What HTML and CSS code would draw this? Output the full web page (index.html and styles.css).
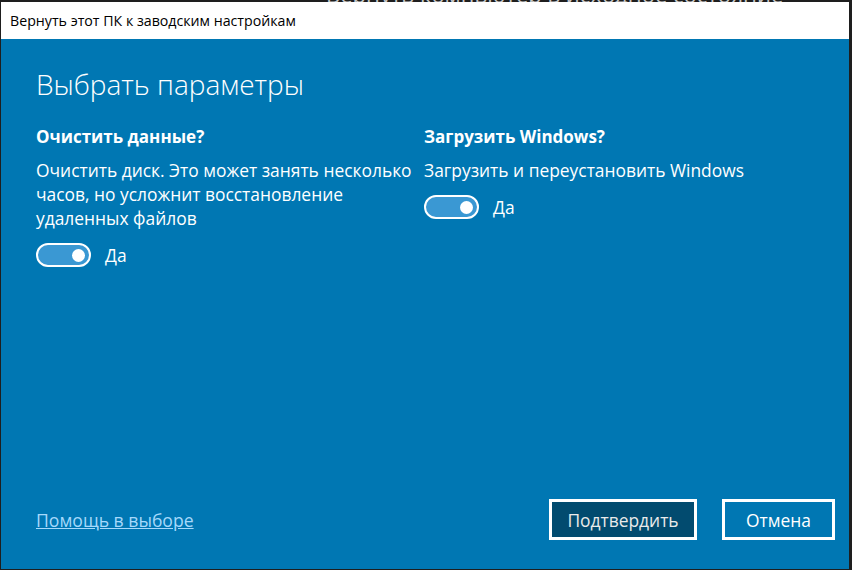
FILE: index.html
```html
<!DOCTYPE html>
<html lang="ru">
<head>
    <meta charset="UTF-8">
    <title>Вернуть этот ПК к заводским настройкам</title>
    <link rel="stylesheet" href="styles.css">
</head>
<body>
    <div class="backdrop"><span class="backdrop-text">Вернуть компьютер в исходное состояние</span></div>
    <div class="window">
        <div class="titlebar">Вернуть этот ПК к заводским настройкам</div>
        <div class="content">
            <h1 class="heading">Выбрать параметры</h1>
            <div class="options">
                <div class="option">
                    <h2 class="option-title">Очистить данные?</h2>
                    <p class="option-text">Очистить диск. Это может занять несколько<br>часов, но усложнит восстановление<br>удаленных файлов</p>
                    <div class="switch-row">
                        <div class="toggle"><span class="knob"></span></div>
                        <span class="switch-label">Да</span>
                    </div>
                </div>
                <div class="option">
                    <h2 class="option-title">Загрузить Windows?</h2>
                    <p class="option-text">Загрузить и переустановить Windows</p>
                    <div class="switch-row">
                        <div class="toggle"><span class="knob"></span></div>
                        <span class="switch-label">Да</span>
                    </div>
                </div>
            </div>
            <div class="footer">
                <a class="help-link" href="#">Помощь в выборе</a>
                <div class="buttons">
                    <button class="btn btn-primary">Подтвердить</button>
                    <button class="btn">Отмена</button>
                </div>
            </div>
        </div>
    </div>
</body>
</html>
```

FILE: styles.css
```css
*{
    margin:0;
    padding:0;
    box-sizing:border-box;
}
body{
    width:852px;
    height:570px;
    overflow:hidden;
    background-color:#1e1e1e;
    font-family:"Open Sans","Noto Sans",sans-serif;
}
.backdrop{
    height:2px;
    overflow:hidden;
    padding-left:326px;
    color:#c8c8c8;
    font-size:22px;
}
.backdrop-text{
    display:block;
    line-height:20px;
    margin-top:-16px;
}
.window{
    margin-left:1px;
    width:848px;
    height:567px;
    display:flex;
    flex-direction:column;
}
.titlebar{
    height:37px;
    background-color:#fff;
    color:#000;
    padding-left:9px;
    font-size:14.2px;
    display:flex;
    align-items:center;
}
.content{
    flex:1;
    background-color:#0077b3;
    color:#fff;
    padding:0 14px 29px 35px;
    display:flex;
    flex-direction:column;
}
.heading{
    font-size:28px;
    font-weight:300;
    line-height:40px;
    margin-top:25px;
}
.options{
    display:grid;
    grid-template-columns:388px 1fr;
    margin-top:21px;
}
.option-title{
    font-size:17px;
    font-weight:700;
    line-height:24px;
}
.option-text{
    font-size:17.4px;
    line-height:24px;
    margin-top:9px;
}
.switch-row{
    display:flex;
    align-items:center;
    gap:14px;
    margin-top:13px;
}
.toggle{
    width:55px;
    height:24px;
    border:2px solid #fff;
    border-radius:12px;
    background-color:#3a98d3;
    display:flex;
    align-items:center;
    justify-content:flex-end;
    padding-right:4px;
}
.knob{
    width:13px;
    height:13px;
    border-radius:50%;
    background-color:#fff;
}
.switch-label{
    font-size:17.4px;
}
.footer{
    margin-top:auto;
    display:flex;
    align-items:center;
    justify-content:space-between;
}
.help-link{
    color:#a6d9fb;
    font-size:17.6px;
}
.buttons{
    display:flex;
    gap:25px;
}
.btn{
    height:41px;
    border:3px solid #fff;
    background-color:#0077b3;
    color:#fff;
    font-family:"Open Sans","Noto Sans",sans-serif;
    font-size:17.4px;
    width:113px;
}
.btn-primary{
    width:148px;
    background-color:#024b6f;
    color:#eaeaea;
}
```
